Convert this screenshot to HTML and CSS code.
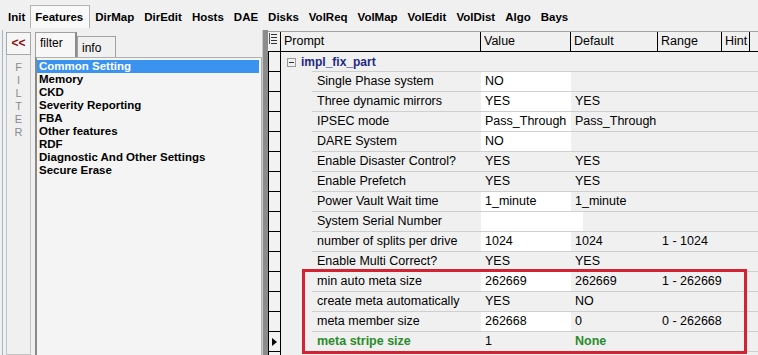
FILE: index.html
```html
<!DOCTYPE html>
<html lang="en">
<head>
  <meta charset="UTF-8" />
  <title>Features</title>
  <link rel="stylesheet" href="styles.css">
</head>
<body>

  <div class="menubar">
    <span class="menu">Init</span>
    <span class="menu active">Features</span>
    <span class="menu">DirMap</span>
    <span class="menu">DirEdit</span>
    <span class="menu">Hosts</span>
    <span class="menu">DAE</span>
    <span class="menu">Disks</span>
    <span class="menu">VolReq</span>
    <span class="menu">VolMap</span>
    <span class="menu">VolEdit</span>
    <span class="menu">VolDist</span>
    <span class="menu">Algo</span>
    <span class="menu">Bays</span>
  </div>

  <div class="main">
    <div class="side">
      <div class="side-col">
        <div class="collapse">&lt;&lt;</div>
        <div class="strip">
          <span>F</span><span>I</span><span>L</span><span>T</span><span>E</span><span>R</span>
        </div>
      </div>
      <div class="side-main">
        <div class="tabs">
          <div class="tab on">filter</div>
          <div class="tab">info</div>
        </div>
        <ul class="list">
          <li class="sel">Common Setting</li>
          <li>Memory</li>
          <li>CKD</li>
          <li>Severity Reporting</li>
          <li>FBA</li>
          <li>Other features</li>
          <li>RDF</li>
          <li>Diagnostic And Other Settings</li>
          <li>Secure Erase</li>
        </ul>
      </div>
    </div>

    <div class="splitter"></div>

    <div class="grid">
      <div class="hdr">
        <div class="rh">
          <svg width="8" height="11" viewBox="0 0 8 11">
            <rect x="0" y="0" width="1" height="11" fill="#555"/>
            <rect x="2" y="1" width="6" height="1" fill="#333"/>
            <rect x="2" y="4" width="6" height="1" fill="#333"/>
            <rect x="2" y="7" width="6" height="1" fill="#333"/>
            <rect x="2" y="10" width="6" height="1" fill="#333"/>
          </svg>
        </div>
        <div class="hc prompt">Prompt</div>
        <div class="hc">Value</div>
        <div class="hc">Default</div>
        <div class="hc">Range</div>
        <div class="hc">Hint</div>
      </div>

      <div class="row">
        <div class="rh"></div>
        <div class="gbody">
          <span class="toggle"></span>
          <span class="gname">impl_fix_part</span>
        </div>
      </div>

      <div class="row">
        <div class="rh"></div>
        <div class="line"><span>Single Phase system</span><span class="val">NO</span><span></span><span></span><span></span></div>
      </div>
      <div class="row">
        <div class="rh"></div>
        <div class="line"><span>Three dynamic mirrors</span><span class="val">YES</span><span>YES</span><span></span><span></span></div>
      </div>
      <div class="row">
        <div class="rh"></div>
        <div class="line"><span>IPSEC mode</span><span class="val">Pass_Through</span><span>Pass_Through</span><span></span><span></span></div>
      </div>
      <div class="row">
        <div class="rh"></div>
        <div class="line"><span>DARE System</span><span class="val">NO</span><span></span><span></span><span></span></div>
      </div>
      <div class="row">
        <div class="rh"></div>
        <div class="line"><span>Enable Disaster Control?</span><span>YES</span><span>YES</span><span></span><span></span></div>
      </div>
      <div class="row">
        <div class="rh"></div>
        <div class="line"><span>Enable Prefetch</span><span>YES</span><span>YES</span><span></span><span></span></div>
      </div>
      <div class="row">
        <div class="rh"></div>
        <div class="line"><span>Power Vault Wait time</span><span class="val">1_minute</span><span>1_minute</span><span></span><span></span></div>
      </div>
      <div class="row">
        <div class="rh"></div>
        <div class="line"><span>System Serial Number</span><span class="val wide"></span><span></span><span></span><span></span></div>
      </div>
      <div class="row">
        <div class="rh"></div>
        <div class="line"><span>number of splits per drive</span><span class="val">1024</span><span>1024</span><span>1 - 1024</span><span></span></div>
      </div>
      <div class="row">
        <div class="rh"></div>
        <div class="line"><span>Enable Multi Correct?</span><span>YES</span><span>YES</span><span></span><span></span></div>
      </div>
      <div class="row">
        <div class="rh"></div>
        <div class="line"><span>min auto meta size</span><span class="val">262669</span><span>262669</span><span>1 - 262669</span><span></span></div>
      </div>
      <div class="row">
        <div class="rh"></div>
        <div class="line"><span>create meta automatically</span><span>YES</span><span>NO</span><span></span><span></span></div>
      </div>
      <div class="row">
        <div class="rh"></div>
        <div class="line"><span>meta member size</span><span class="val">262668</span><span>0</span><span>0 - 262668</span><span></span></div>
      </div>
      <div class="row">
        <div class="rh current"></div>
        <div class="line changed"><span>meta stripe size</span><span>1</span><span>None</span><span></span><span></span></div>
      </div>
      <div class="row">
        <div class="rh"></div>
      </div>

      <div class="mark"></div>
    </div>
  </div>

</body>
</html>
```

FILE: styles.css
```css
html, body {
  margin: 0;
  padding: 0;
}

body {
  width: 758px;
  height: 355px;
  overflow: hidden;
  background-color: #f0f0f0;
  color: #000;
  font-family: "Liberation Sans", Arial, sans-serif;
  font-size: 12px;
}

/* top tab strip */
.menubar {
  height: 30px;
  box-sizing: border-box;
  padding: 5px 0 0 3px;
  display: flex;
  align-items: flex-start;
}

.menu {
  height: 22px;
  line-height: 22px;
  padding: 0 4px;
  font-weight: bold;
  font-size: 11.5px;
  border: 1px solid transparent;
  border-bottom: none;
}

.menu.active {
  background-color: #f9f9f9;
  border-color: #b4b4b4;
  padding-right: 6px;
}

.main {
  display: flex;
  height: 325px;
}

/* left filter panel */
.side {
  width: 260px;
  box-sizing: border-box;
  display: flex;
  padding: 2px 0 0 3px;
  margin-left: 2px;
  border-left: 1px solid #a4b6c8;
}

.side-col {
  width: 25px;
  display: flex;
  flex-direction: column;
}

.collapse {
  height: 23px;
  box-sizing: border-box;
  border: 1px solid #a8a8a8;
  background-color: #f6f6f6;
  color: #8a1010;
  font-weight: bold;
  font-size: 12px;
  text-align: center;
  line-height: 21px;
}

.strip {
  flex: 1;
  border: 1px solid #c4c4c4;
  border-top: none;
  display: flex;
  flex-direction: column;
  align-items: center;
  padding-top: 6px;
  color: #8c8c8c;
  font-size: 11px;
  line-height: 13px;
}

.side-main {
  flex: 1;
  margin-left: 4px;
  display: flex;
  flex-direction: column;
}

.tabs {
  height: 25px;
  display: flex;
  align-items: flex-end;
}

.tab {
  height: 21px;
  box-sizing: border-box;
  border: 1px solid #a0a0a0;
  border-bottom: none;
  padding: 4px 0 0 4px;
  width: 39px;
  font-size: 12px;
}

.tab.on {
  height: 25px;
  width: 42px;
  padding-top: 3px;
  background-color: #f7f7f7;
  border-right: 2px solid #8c8c8c;
}

.list {
  flex: 1;
  margin: 0;
  padding: 2px 2px 0 0;
  list-style: none;
  background-color: #f4f4f4;
  border: 1px solid #b0b0b0;
  border-left: 2px solid #8a8a8a;
  border-bottom: none;
  font-weight: bold;
  font-size: 11.5px;
  line-height: 13px;
}

.list li {
  padding-left: 2px;
}

.list li.sel {
  background-color: #3b93f0;
  color: #fff;
}

.splitter {
  width: 5px;
  background-color: #8c8c8c;
  border-left: 1px solid #c8c8c8;
}

/* property grid */
.grid {
  flex: 1;
  position: relative;
  padding-top: 1px;
}

.hdr {
  display: flex;
  height: 21px;
  box-sizing: border-box;
  border-top: 1px solid #a0a0a0;
  border-bottom: 1px solid #000;
}

.hc {
  box-sizing: border-box;
  border-right: 1px solid #000;
  padding-left: 3px;
  line-height: 19px;
  font-size: 12.5px;
}

.hc.prompt { width: 200px; }
.hc:nth-child(3) { width: 90px; }
.hc:nth-child(4) { width: 87px; }
.hc:nth-child(5) { width: 64px; }
.hc:nth-child(6) { width: 28px; padding-left: 3px; }

.rh {
  width: 13px;
  flex: none;
  box-sizing: border-box;
  border-left: 1px solid #000;
  border-right: 1px solid #000;
  display: flex;
  align-items: center;
  justify-content: center;
}

.hdr .rh {
  border-left: none;
  justify-content: flex-start;
  padding-left: 1px;
  align-items: flex-start;
  padding-top: 1px;
}

.row {
  display: flex;
  height: 20px;
}

.row .rh {
  border-bottom: 1px solid #000;
  background-color: #f2f2f2;
}

.rh.current::before {
  content: "";
  border-left: 5px solid #000;
  border-top: 4px solid transparent;
  border-bottom: 4px solid transparent;
}

.gbody {
  flex: 1;
  display: flex;
  align-items: center;
  padding-left: 6px;
  background: linear-gradient(#cfcfcf, #cfcfcf) 31px 100% / calc(100% - 31px) 1px no-repeat;
}

.toggle {
  width: 9px;
  height: 9px;
  box-sizing: border-box;
  border: 1px solid #9a9a9a;
  background: linear-gradient(#333, #333) center / 5px 1px no-repeat;
  margin-right: 5px;
}

.gname {
  font-weight: bold;
  color: #1e2a82;
}

.line {
  flex: 1;
  margin-left: 31px;
  display: grid;
  grid-template-columns: 169px 90px 87px 64px 1fr;
  border-bottom: 1px solid #cfcfcf;
  font-size: 12.5px;
  line-height: 19px;
}

.line span {
  padding-left: 4px;
  white-space: nowrap;
}

.line span:first-child {
  padding-left: 5px;
}

.line .val {
  background-color: #fff;
}

.line .wide {
  box-shadow: 12px 0 0 #fff;
}

.line.changed span:first-child,
.line.changed span:nth-child(3) {
  color: #2a8c2a;
  font-weight: bold;
}

/* highlight frame over the meta rows */
.mark {
  position: absolute;
  left: 34px;
  top: 239px;
  width: 445px;
  height: 85px;
  box-sizing: border-box;
  border: 3px solid #d42232;
}
```
